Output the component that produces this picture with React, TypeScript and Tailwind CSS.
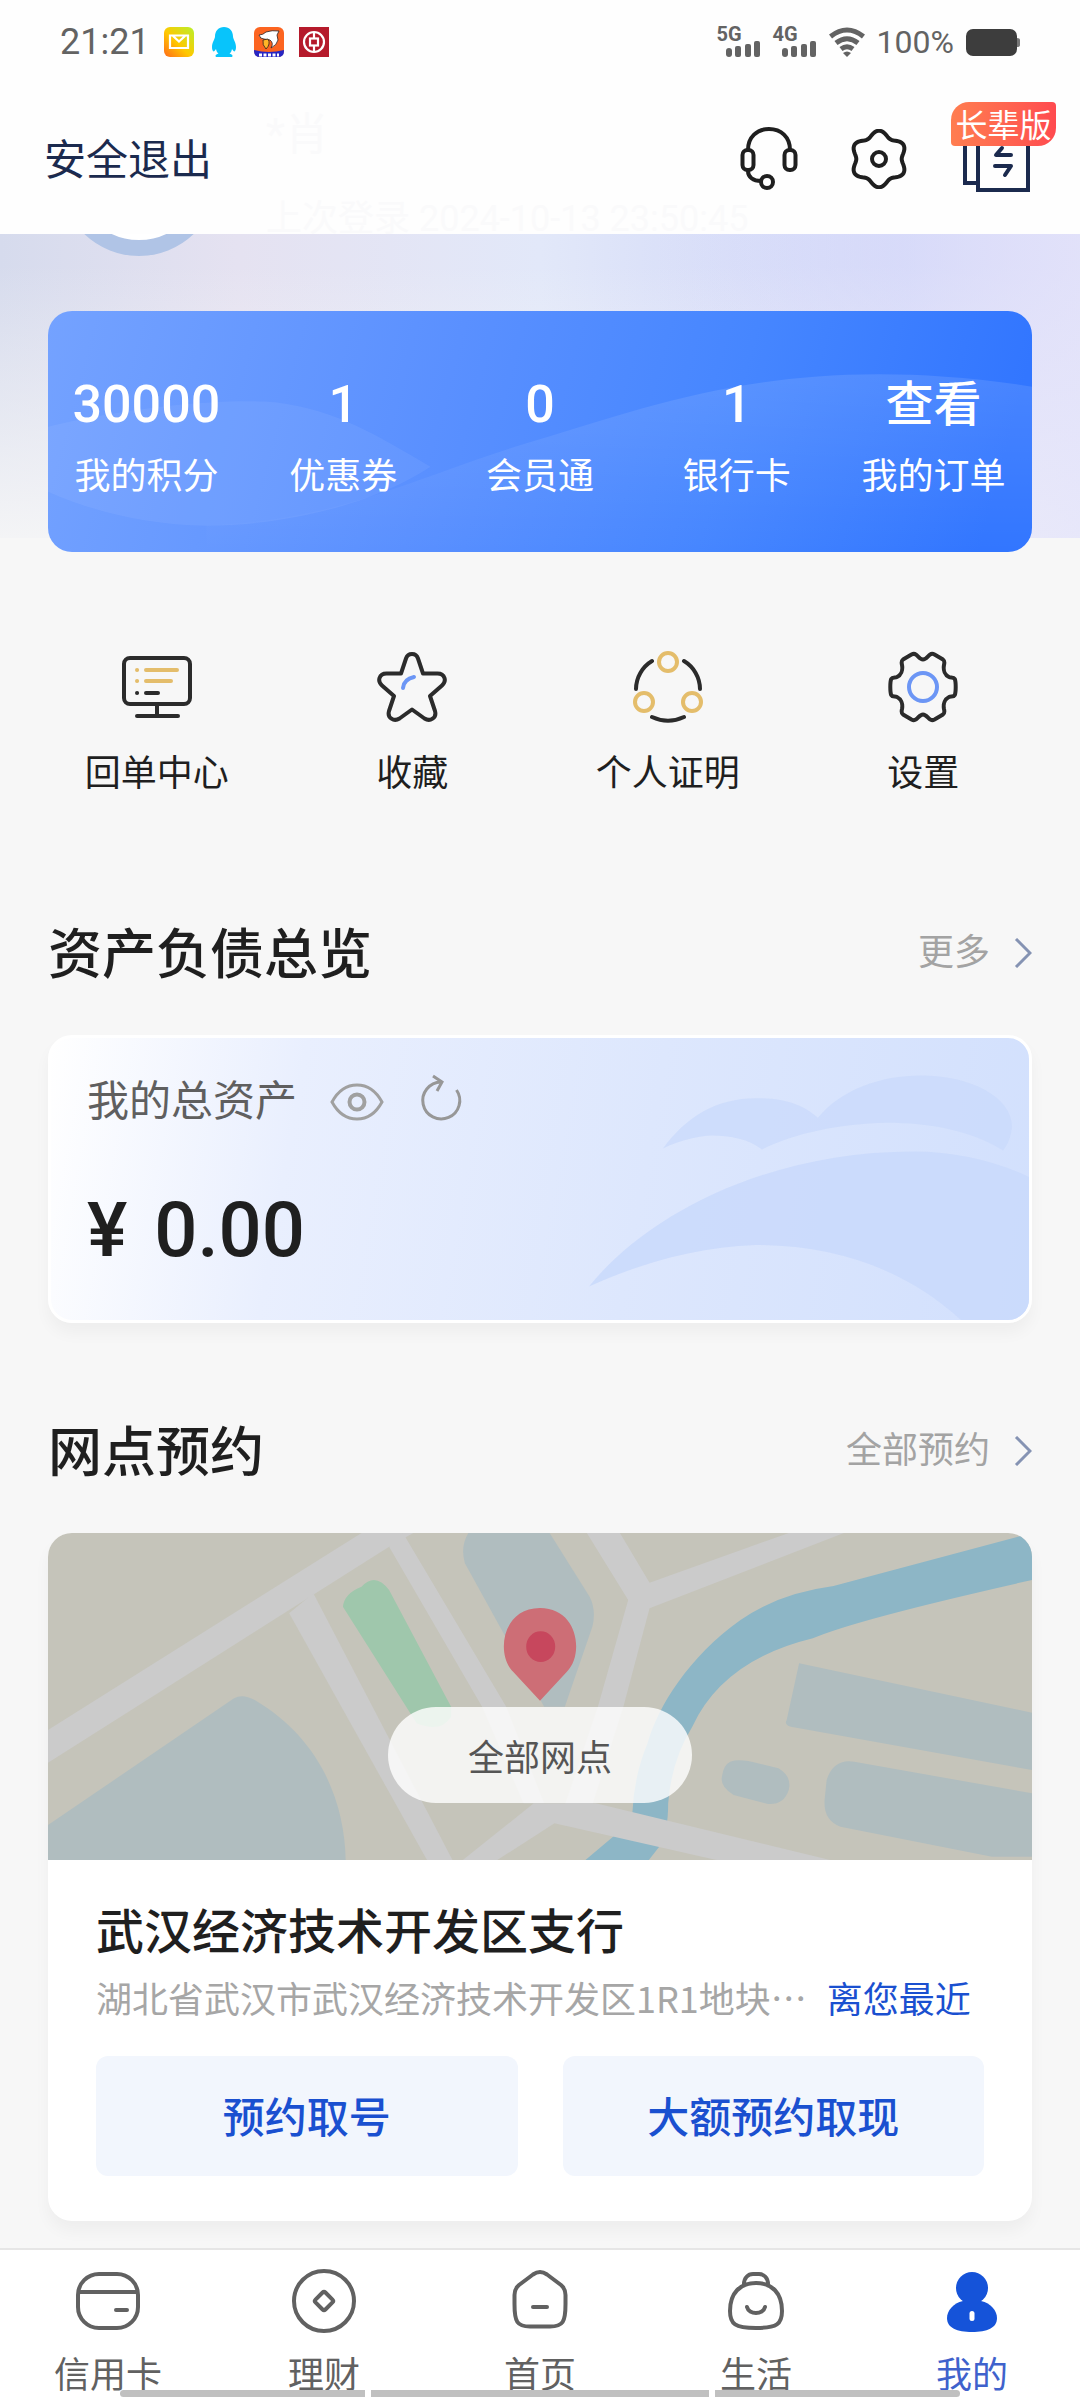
import type { ReactNode } from 'react'

// 波浪形轮廓，用于顶部设置图标
function wavePath(cx: number, cy: number, r: number, amp: number, lobes: number) {
  const points: string[] = []
  for (let i = 0; i < 120; i++) {
    const a = (i / 120) * Math.PI * 2
    const d = r + amp * Math.cos(lobes * a)
    points.push(`${(cx + d * Math.sin(a)).toFixed(2)} ${(cy - d * Math.cos(a)).toFixed(2)}`)
  }
  return `M${points.join('L')}Z`
}

function Signal({ label }: { label: string }) {
  return (
    <div className="flex w-11 flex-col">
      <span className="text-[20px] leading-[14px] font-bold">{label}</span>
      <svg className="ml-auto h-4 w-9" viewBox="0 0 36 16" fill="currentColor">
        <rect x="1" y="7" width="6" height="9" rx="3" />
        <rect x="10" y="5" width="6" height="11" rx="2" />
        <rect x="20" y="3" width="6" height="13" rx="2" />
        <rect x="29" y="0" width="6" height="16" rx="2" />
      </svg>
    </div>
  )
}

function StatusBar() {
  return (
    <div className="flex h-[84px] items-center justify-between px-[60px] text-[#636363]">
      <div className="flex items-center">
        <span className="w-[104px] text-[36px] leading-[48px]">21:21</span>
        {/* 通知图标 */}
        <div className="flex gap-[15px]">
          <svg className="size-[30px]" viewBox="0 0 30 30">
            <defs>
              <linearGradient id="mail" x1="0" y1="1" x2="1" y2="0">
                <stop offset="0" stopColor="#ff6a1a" />
                <stop offset="0.45" stopColor="#ffc800" />
                <stop offset="1" stopColor="#b8f02c" />
              </linearGradient>
            </defs>
            <rect width="30" height="30" rx="6" fill="url(#mail)" />
            <path d="M6 8.500h18v12.500H6ZM9 9l6 5.500L21 9" fill="none" stroke="#fff" strokeWidth="2.200" />
          </svg>
          <svg className="size-[30px]" viewBox="0 0 30 30">
            <path
              d="M15 0C9.500 0 6 4 6 9.500C6 12 3 15.500 3 20C3 23 4 25.500 5.500 24L7 22C7.500 24 8 25.500 9.500 26.500C6 27.500 5.500 30 8 30H22C24.500 30 24 27.500 20.500 26.500C22 25.500 22.500 24 23 22L24.500 24C26 25.500 27 23 27 20C27 15.500 24 12 24 9.500C24 4 20.500 0 15 0Z"
              fill="#08c4fb"
            />
          </svg>
          <svg className="size-[30px]" viewBox="0 0 30 30">
            <rect width="30" height="30" rx="6" fill="#fc6420" />
            <path d="M0 23Q15 27 30 23V24Q30 30 24 30H6Q0 30 0 24Z" fill="#2626c4" />
            <path d="M5 8Q9 8 12 5Q18 3 25 4L23 8L24 13Q23 18 17 21Q20 16 16 13L10 12Q6 12 5 8Z" fill="#fff" stroke="#2b2020" strokeWidth="0.800" />
            <path d="M9 13L14 12Q17 17 12 22Q8 18 9 13Z" fill="#ffb627" stroke="#2b2020" strokeWidth="0.800" />
            <path d="M5 28h20" stroke="#fff" strokeWidth="3" strokeDasharray="3 1.500" />
          </svg>
          <svg className="size-[30px]" viewBox="0 0 30 30" fill="none" stroke="#fff" strokeWidth="2.200">
            <rect width="30" height="30" fill="#b51a2b" stroke="none" />
            <circle cx="15" cy="15" r="10" />
            <rect x="11" y="11.500" width="8" height="7" />
            <path d="M15 5v6.500M15 18.500V25" />
          </svg>
        </div>
      </div>
      <div className="flex items-center gap-3">
        <Signal label="5G" />
        <Signal label="4G" />
        <svg className="h-[30px] w-9" viewBox="0 0 36 30" fill="none" stroke="currentColor" strokeWidth="5">
          <path d="M1.500 9.500Q18 -3.500 34.500 9.500M7 16Q18 7.500 29 16M12 22Q18 17.500 24 22" />
          <path d="M14 26Q18 23 22 26L18 30Z" fill="currentColor" stroke="none" />
        </svg>
        <span className="text-[32px] leading-[48px]">100%</span>
        <svg className="h-[27px] w-[54px]" viewBox="0 0 54 27">
          <rect width="51" height="27" rx="7" fill="#3d3d3d" />
          <path d="M51 9Q54 9 54 11V16Q54 18 51 18Z" fill="#777" />
        </svg>
      </div>
    </div>
  )
}

function Header() {
  return (
    <header className="relative z-10 bg-[#fefefe]">
      <div className="absolute top-[105px] left-[266px] text-[#fafafb]">
        <p className="text-[44px] leading-[60px]">*肖</p>
        <p className="mt-[30px] text-[36px] leading-[48px]">上次登录 2024-10-13 23:50:45</p>
      </div>
      <StatusBar />
      <div className="relative flex h-[150px] items-center justify-between px-11">
        <button type="button" className="pt-1 text-[42px] leading-[60px] text-[#1b2a4e]">安全退出</button>
        <div className="flex items-center gap-[52px]">
          <button type="button" aria-label="客服">
            <svg className="h-16 w-[58px]" viewBox="0 0 58 64" fill="none" stroke="#1f1f1f" strokeWidth="4">
              <path d="M8 23C8 10 17 2 29 2S50 10 50 23" />
              <rect x="2.500" y="23" width="11" height="20" rx="5" />
              <rect x="44.500" y="23" width="11" height="20" rx="5" />
              <path d="M8 44C8 50 13 54 21 54" />
              <circle cx="27" cy="55" r="6" />
            </svg>
          </button>
          <button type="button" aria-label="偏好">
            <svg className="h-[60px] w-[58px]" viewBox="0 0 58 60" fill="none" stroke="#1f1f1f" strokeWidth="4">
              <path d={wavePath(29, 30, 25.5, 2.8, 6)} />
              <circle cx="29" cy="30" r="7" />
            </svg>
          </button>
          <button type="button" className="relative">
            <svg className="h-24 w-[76px]" viewBox="0 0 76 96" fill="none" stroke="#1b2a4e" strokeWidth="4">
              <path d="M18 72H5V28H18" />
              <rect x="18" y="20" width="50" height="59" />
              <path d="M42 37L36 44H51M35 55H51L45 64" strokeLinecap="round" strokeLinejoin="round" />
            </svg>
            <span className="absolute -top-[9px] -left-[9px] h-11 w-[105px] rounded-tl-[18px] rounded-tr-[4px] rounded-br-[18px] rounded-bl-[4px] bg-linear-to-r from-[#ff7d50] to-[#ff4a4f] text-[32px] leading-[48px] whitespace-nowrap text-white">
              长辈版
            </span>
          </button>
        </div>
      </div>
    </header>
  )
}

const stats = [
  { value: '30000', label: '我的积分' },
  { value: '1', label: '优惠券' },
  { value: '0', label: '会员通' },
  { value: '1', label: '银行卡' },
  { value: '查看', label: '我的订单' },
]

function Hero() {
  return (
    <section className="relative px-12 pt-[77px]">
      {/* 背景渐变 */}
      <div className="absolute inset-x-0 top-0 h-[304px] overflow-hidden bg-[linear-gradient(90deg,#d6dbed_0%,#e5e2f1_22%,#e2e8f9_50%,#ccd2f8_84%,#d7d6f5_100%)]">
        <div className="absolute inset-0 bg-linear-to-b from-transparent from-10% to-[#f7f7f7]/90" />
        <div className="absolute inset-0 bg-linear-to-r from-transparent from-60% to-[#e4e4fb]/80" />
        <div className="absolute -top-[136px] left-[60px] size-[158px] rounded-full border-[16px] border-[#b0c4e6] bg-white" />
      </div>
      <div className="relative grid grid-cols-5 overflow-hidden rounded-3xl bg-[linear-gradient(105deg,#74a2ff_0%,#5a90ff_40%,#4686ff_68%,#3276ff_95%)] pt-16 pb-[51px] text-center text-white">
        <svg className="absolute inset-0 size-full" viewBox="70 123 1428 723" preserveAspectRatio="none">
          <defs>
            <linearGradient id="wave" x1="0" y1="0" x2="0" y2="1">
              <stop offset="0" stopColor="#fff" stopOpacity="0.110" />
              <stop offset="1" stopColor="#fff" stopOpacity="0" />
            </linearGradient>
          </defs>
          <path d="M70 470C200 405 340 385 400 397C490 420 550 500 625 590C560 680 440 765 300 767C210 765 130 720 70 665Z" fill="#fff" fillOpacity="0.060" />
          <path d="M300 767C500 750 600 620 780 510C960 400 1150 240 1498 350V846H300Z" fill="url(#wave)" />
        </svg>
        {stats.map((item) => (
          <a key={item.label} href="#" className="relative block">
            <div className={item.value === '查看' ? 'text-[48px] leading-[60px] font-medium' : 'text-[52px] leading-[60px] font-medium'}>
              {item.value}
            </div>
            <div className="mt-[18px] text-[36px] leading-[48px]">{item.label}</div>
          </a>
        ))}
      </div>
    </section>
  )
}

function QuickLink({ label, children }: { label: string; children: ReactNode }) {
  return (
    <a href="#" className="flex flex-col items-center gap-[27px] text-[36px] leading-[48px] text-[#1f1f1f]">
      <svg className="size-[72px]" viewBox="0 0 72 72" fill="none" stroke="#2b2b2b" strokeWidth="4" strokeLinecap="round" strokeLinejoin="round">
        {children}
      </svg>
      {label}
    </a>
  )
}

function QuickLinks() {
  return (
    <nav className="mt-[99px] grid grid-cols-4 px-[29px]">
      <QuickLink label="回单中心">
        <rect x="3" y="7" width="66" height="46" rx="6" />
        <path d="M36 53V65M16 65H57M25 42H37M16 42H16.100" />
        <path d="M25 19H56M25 30H50M16 19H16.100M16 30H16.100" stroke="#e4bd6b" />
      </QuickLink>
      <QuickLink label="收藏">
        <path d="M36 3C39 3 41 4.500 42 7.500L47 22.500H61.500C69 22.500 71 30 66 34.500L54 45L59 60C61 67 54 71 48.500 67.500L36 58.500L23.500 67.500C18 71 11 67 13 60L18 45L6 34.500C1 30 3 22.500 10.500 22.500H25L30 7.500C31 4.500 33 3 36 3Z" />
        <path d="M27 37Q28 28 38 26" stroke="#6c96f5" />
      </QuickLink>
      <QuickLink label="个人证明">
        <path d="M20 10A33 33 0 0 0 4 38M52 10A33 33 0 0 1 68 38M20 66A38 38 0 0 0 52 66" />
        <g stroke="#e4bd6b">
          <circle cx="36" cy="11" r="9" />
          <circle cx="12" cy="51" r="9" />
          <circle cx="60" cy="51" r="9" />
        </g>
      </QuickLink>
      <QuickLink label="设置">
        <path d="M36 8.500C33 8.500 31 5 29 3.600C27.500 2.500 26 2.700 24.500 3.500L16 8.500C14 10 14.500 12 15 14C16 19 14 24 10 26C8 27 5.500 25.500 4.200 28C3 31 3 41 4.200 44C5.500 46.500 8 45 10 46C14 48 16 53 15 58C14.500 60 14 62 16 63.500L24.500 68.500C26 69.300 27.500 69.500 29 68.400C31 67 33 63.500 36 63.500C39 63.500 41 67 43 68.400C44.500 69.500 46 69.300 47.500 68.500L56 63.500C58 62 57.500 60 57 58C56 53 58 48 62 46C64 45 66.500 46.500 67.800 44C69 41 69 31 67.800 28C66.500 25.500 64 27 62 26C58 24 56 19 57 14C57.500 12 58 10 56 8.500L47.500 3.500C46 2.700 44.500 2.500 43 3.600C41 5 39 8.500 36 8.500Z" />
        <circle cx="36" cy="36" r="14" stroke="#6c96f5" />
      </QuickLink>
    </nav>
  )
}

function SectionTitle({ title, more }: { title: string; more: string }) {
  return (
    <div className="mb-10 flex items-start justify-between">
      <h2 className="text-[54px] leading-[78px] font-medium text-[#1f1f1f]">{title}</h2>
      <a href="#" className="flex items-center gap-6 text-[36px] leading-[72px] text-[#a3a3a3]">
        {more}
        <svg className="h-[30px] w-[18px]" viewBox="0 0 18 30" fill="none" stroke="#8593b3" strokeWidth="3">
          <path d="M2 1L16 15L2 29" />
        </svg>
      </a>
    </div>
  )
}

function Assets() {
  return (
    <section className="mt-[119px] px-12">
      <SectionTitle title="资产负债总览" more="更多" />
      <div className="relative overflow-hidden rounded-3xl border-[3px] border-white bg-[linear-gradient(100deg,#ffffff_0%,#e9effe_25%,#dde7fd_60%,#d2e0fd_100%)] px-9 pt-10 pb-12 shadow-[0_10px_16px_rgba(0,0,0,0.04)]">
        <svg className="absolute top-0 right-0 h-full w-[450px]" viewBox="533 0 450 286" preserveAspectRatio="none" fill="#c9d9fb">
          <path d="M617 112C640 80 670 61 710 61C740 61 758 68 772 81C795 52 835 38 875 38C925 38 966 60 966 90C965 100 962 108 957 114C925 94 885 86 840 86C795 87 750 96 716 113C703 103 685 99 665 99C648 100 632 105 617 112Z" opacity="0.750" />
          <path d="M543 252C600 180 720 115 868 115C910 115 950 125 983 141V286H915C860 235 790 210 710 210C650 212 590 230 543 252Z" opacity="0.850" />
        </svg>
        <div className="relative flex items-center">
          <span className="text-[42px] leading-[48px] text-[#5f5f5f]">我的总资产</span>
          <button type="button" aria-label="显示金额" className="ml-[33px]">
            <svg className="h-[38px] w-[54px]" viewBox="0 0 54 38" fill="none" stroke="#a0a0a0" strokeWidth="3">
              <path d="M2 19C8 8 17 2 27 2S46 8 52 19C46 30 37 36 27 36S8 30 2 19Z" />
              <circle cx="27" cy="19" r="7.500" strokeWidth="4" />
            </svg>
          </button>
          <button type="button" aria-label="刷新" className="ml-9">
            <svg className="h-12 w-[42px] overflow-visible" viewBox="0 0 42 48" fill="none" stroke="#979797" strokeWidth="3">
              <path d="M36.500 12A18.500 18.500 0 1 1 21 4" />
              <path d="M13 -2L22 4L17 13" />
            </svg>
          </button>
        </div>
        <p className="relative mt-[62px] text-[76px] leading-[84px] font-medium text-[#1f1f1f]">
          <span className="mr-2">¥</span> 0.00
        </p>
      </div>
    </section>
  )
}

function BranchMap() {
  return (
    <svg className="absolute inset-0 size-full" viewBox="70 399 1428 981" preserveAspectRatio="none">
      <rect x="70" y="399" width="1428" height="981" fill="#c5c4ba" />
      <g fill="#b0bdbf">
        <path d="M70 1275L340 895Q352 880 370 900C460 1010 500 1190 502 1380H70Z" />
        <path d="M680 399Q668 440 675 490L790 920H820L860 680Q866 630 856 590L798 399Z" />
        <path d="M1160 790L1498 938V1110L1148 980Q1138 975 1142 960Z" />
        <path d="M1240 1085L1498 1180V1370H1440L1220 1280Q1195 1260 1197 1200L1200 1140Q1210 1075 1240 1085Z" />
        <path d="M1060 1085Q1075 1075 1100 1090L1130 1105Q1150 1130 1145 1170Q1138 1215 1115 1212L1065 1185Q1045 1160 1048 1130Q1050 1095 1060 1085Z" />
      </g>
      <path d="M525 560Q500 580 498 620L605 970Q640 1000 655 950V920L565 570Q545 515 525 560Z" fill="#9fc7ac" />
      <path d="M1498 399L1210 558Q1130 580 1075 660C1000 770 955 920 940 1030Q920 1130 918 1240L890 1310L850 1380H942L957 1340Q970 1300 970 1210Q975 1080 1005 980Q1050 780 1180 715Q1240 660 1498 540Z" fill="#8db6c6" />
      <g fill="#cbcbcb">
        <path d="M70 990L525 399H600L565 440L70 1088Z" />
        <path d="M420 640L455 580L657 1380H620Z" />
        <path d="M565 440L585 399L735 920L790 1210H760L700 920Z" />
        <path d="M852 399H900L943 548L1145 399H1225L943 625L905 920L860 1215H820L868 920L912 600Z" />
        <path d="M672 1380L775 1210H865L1205 1380H1040L805 1270L722 1380Z" />
      </g>
      <path d="M784 902L745 815C720 765 728 624 784 624C840 624 848 765 823 815Z" fill="#cd6e76" />
      <ellipse cx="785" cy="740" rx="21" ry="46" fill="#c7475d" />
    </svg>
  )
}

function Branch() {
  return (
    <section className="mt-[92px] px-12 pb-[26px]">
      <SectionTitle title="网点预约" more="全部预约" />
      <div className="overflow-hidden rounded-3xl bg-white shadow-[0_10px_16px_rgba(0,0,0,0.04)]">
        <div className="relative flex h-[327px] items-end justify-center pb-[57px]">
          <BranchMap />
          <button type="button" className="relative h-24 w-[304px] rounded-full bg-white/80 pt-2 text-[36px] text-[#555]">
            全部网点
          </button>
        </div>
        <div className="px-12 pt-[43px] pb-[45px]">
          <h3 className="text-[48px] leading-[60px] font-medium text-[#1f1f1f]">武汉经济技术开发区支行</h3>
          <div className="mt-[10px] flex gap-5 text-[36px] leading-[48px] whitespace-nowrap">
            <p className="font-['Noto_Sans_CJK_SC',sans-serif] text-[#a6a6a6]">湖北省武汉市武汉经济技术开发区1R1地块…</p>
            <span className="font-['Noto_Sans_CJK_SC',sans-serif] text-[#1a50d0]">离您最近</span>
          </div>
          <div className="mt-[35px] grid grid-cols-2 gap-[45px] text-[42px] font-medium text-[#1a50d0]">
            <button type="button" className="h-[120px] rounded-xl bg-[#f2f6fd] pt-1">预约取号</button>
            <button type="button" className="h-[120px] rounded-xl bg-[#f2f6fd] pt-1">大额预约取现</button>
          </div>
        </div>
      </div>
    </section>
  )
}

function Tab({ label, active, children }: { label: string; active?: boolean; children: ReactNode }) {
  return (
    <a href="#" className={`flex flex-col items-center gap-[18px] text-[36px] leading-[48px] ${active ? 'text-[#3f62cc]' : 'text-[#616161]'}`}>
      <svg className="size-16 overflow-visible" viewBox="0 0 64 64" fill="none" stroke="#616161" strokeWidth="4" strokeLinecap="round" strokeLinejoin="round">
        {children}
      </svg>
      {label}
    </a>
  )
}

function TabBar() {
  return (
    <nav className="relative grid grid-cols-5 border-t-2 border-[#e6e6e6] bg-white pt-5">
      <Tab label="信用卡">
        <rect x="2" y="4" width="60" height="54" rx="21" />
        <path d="M3 22H61M40 40H51" />
      </Tab>
      <Tab label="理财">
        <circle cx="32" cy="31" r="30" />
        <rect x="25" y="24" width="14" height="14" rx="2" transform="rotate(45 32 31)" />
      </Tab>
      <Tab label="首页">
        <path d="M25 4.500C30 1 34 1 39 4.500L53 15C56.500 18 57.500 21 57.500 25V34C57.500 52 55 56.500 42 56.500H22C9 56.500 6.500 52 6.500 34V25C6.500 21 7.500 18 11 15Z" />
        <path d="M25 37H39" />
      </Tab>
      <Tab label="生活">
        <path d="M32 13C48 13 58 23 58 41C58 54 53 58 32 58S6 54 6 41C6 23 16 13 32 13Z" />
        <path d="M20 14C20 8 24 4 29 4H35C40 4 44 8 44 14M23 37C25 45 39 45 41 37" />
      </Tab>
      <Tab label="我的" active>
        <g fill="#1553d9" stroke="none">
          <circle cx="32" cy="18" r="16" />
          <path d="M23 31H41C51 33 57 41 57 48C57 58 47 62 32 62S7 58 7 48C7 41 13 33 23 31Z" />
          <rect x="29.500" y="41" width="5" height="10" rx="2.500" fill="#fff" />
        </g>
      </Tab>
      {/* 系统手势条 */}
      <div className="absolute inset-x-[120px] bottom-[3px] grid grid-cols-[245fr_338fr_245fr] gap-[6px]">
        <div className="h-[7px] rounded-l-full bg-[#c0c0c0]" />
        <div className="h-[7px] bg-[#c0c0c0]" />
        <div className="h-[7px] rounded-r-full bg-[#c0c0c0]" />
      </div>
    </nav>
  )
}

export default function App() {
  return (
    <div className="flex min-h-screen flex-col bg-[#f7f7f7] font-['Roboto','Noto_Sans_CJK_SC',sans-serif]">
      <Header />
      <main className="flex-1">
        <Hero />
        <QuickLinks />
        <Assets />
        <Branch />
      </main>
      <TabBar />
    </div>
  )
}
